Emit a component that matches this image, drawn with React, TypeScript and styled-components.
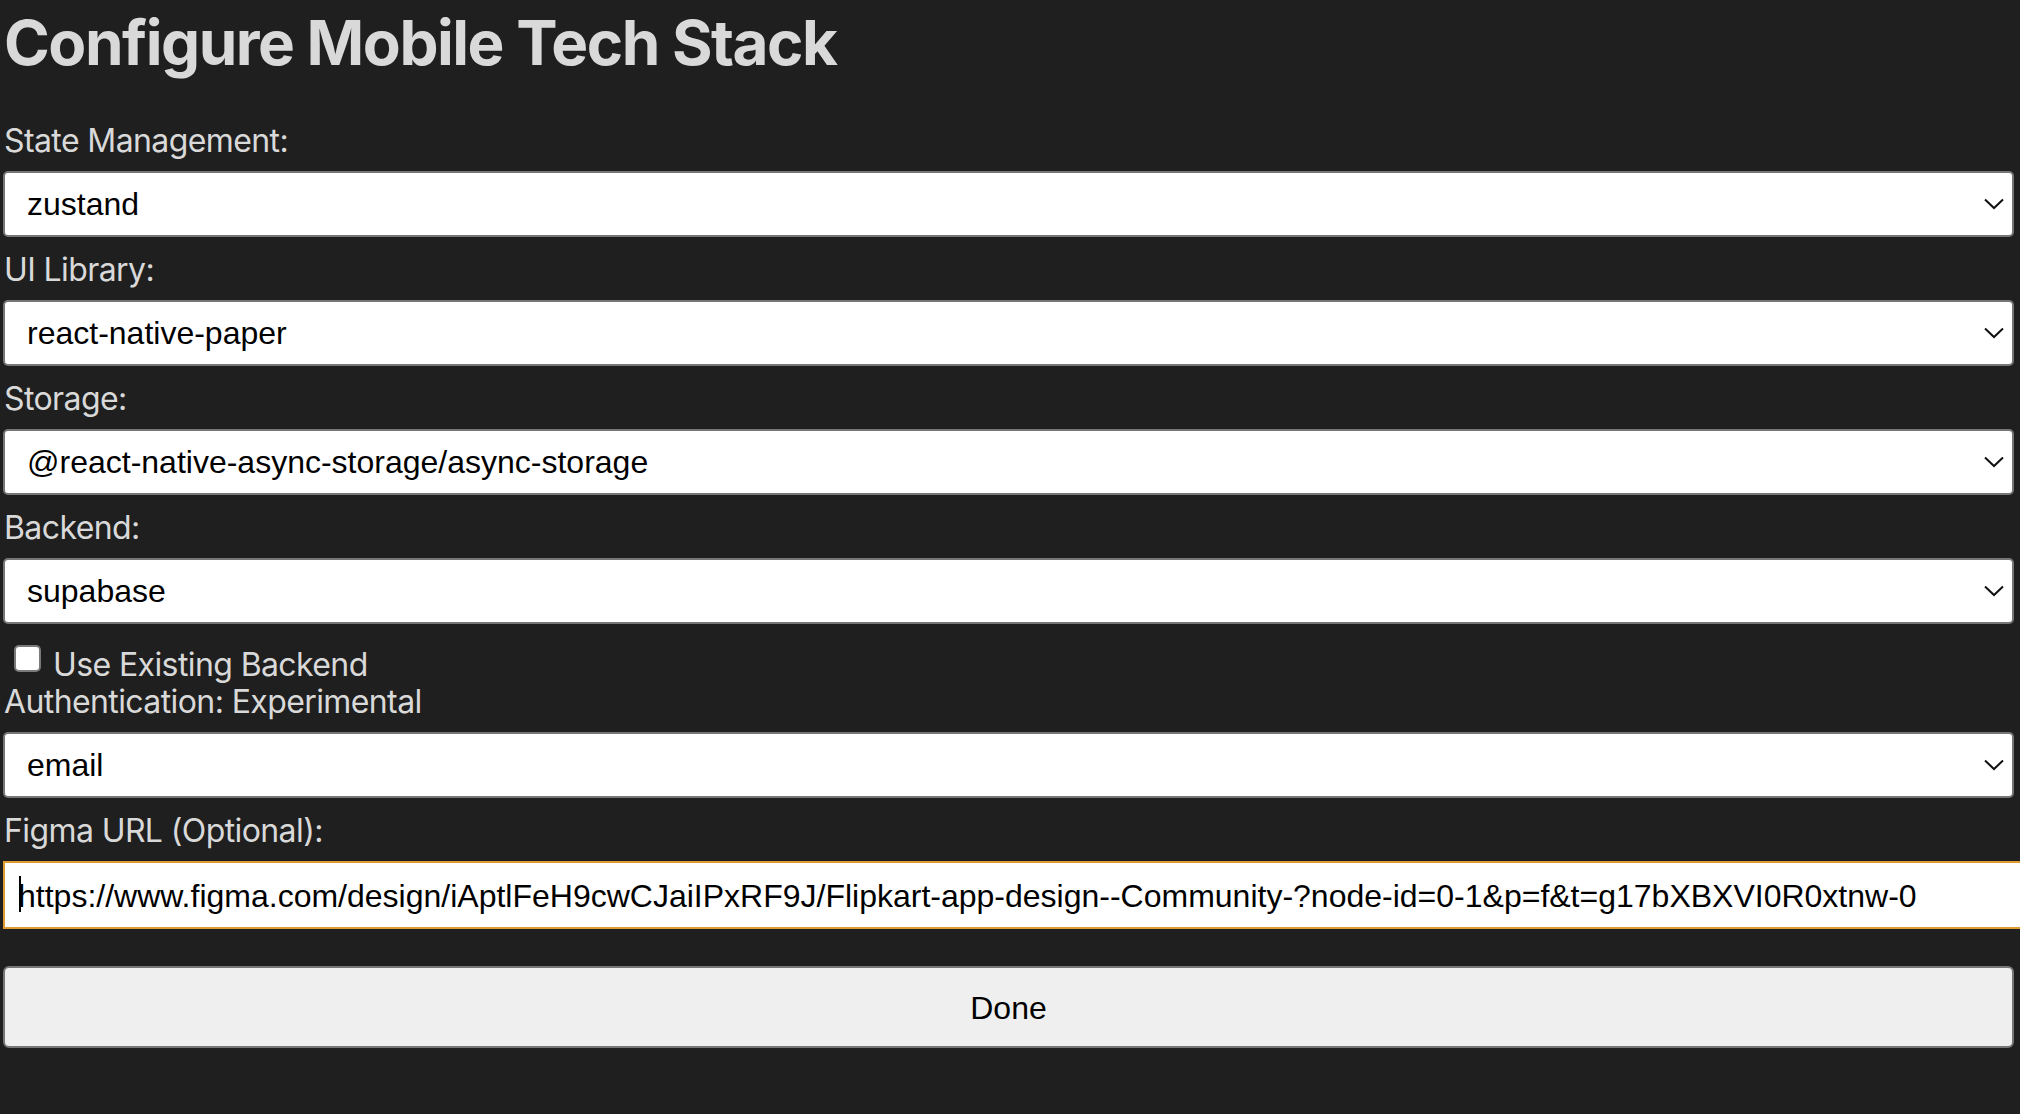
import React from "react";
import styled, { createGlobalStyle } from "styled-components";

const Global = createGlobalStyle`
  html, body {
    margin: 0;
    padding: 0;
    background: #1f1f1f;
    overflow: hidden;
  }
  * { box-sizing: border-box; }
`;

const Page = styled.div`
  min-height: 1114px;
  background: #1f1f1f;
  padding: 4px 6px 0 3px;
  font-family: Inter, "Noto Sans", sans-serif;
  color: #d9d9d9;
`;

const Title = styled.h1`
  margin: 0 0 39px 1px;
  font-size: 62px;
  line-height: 77px;
  font-weight: 700;
  letter-spacing: -1.5px;
  color: #d9d9d9;
`;

const Form = styled.form`
  display: flex;
  flex-direction: column;
`;

const Label = styled.label`
  display: block;
  height: 38px;
  line-height: 42px;
  font-size: 32px;
  margin: 0 0 13px 1px;
  letter-spacing: -0.6px;
  white-space: nowrap;
`;

const SelectWrap = styled.div`
  position: relative;
  margin-bottom: 12px;
`;

const Select = styled.select`
  appearance: none;
  -webkit-appearance: none;
  display: block;
  width: 100%;
  height: 66px;
  padding: 0 60px 0 22px;
  border: 2px solid #767676;
  border-radius: 5px;
  background: #ffffff;
  color: #000;
  font-family: "Liberation Sans", Arial, sans-serif;
  font-size: 32px;
  outline: none;
`;

const Chevron = styled.svg`
  position: absolute;
  right: 10px;
  top: 50%;
  width: 20px;
  height: 12px;
  margin-top: -6px;
  pointer-events: none;
`;

const CheckRow = styled.div`
  display: flex;
  align-items: flex-start;
  height: 45px;
`;

const CheckBox = styled.span`
  display: block;
  width: 27px;
  height: 27px;
  margin: 9px 0 0 11px;
  border: 2px solid #7a7a7a;
  border-radius: 5px;
  background: #ffffff;
`;

const CheckText = styled.span`
  display: block;
  margin: 10px 0 0 12px;
  line-height: 38px;
  font-size: 32px;
  letter-spacing: -0.6px;
  white-space: nowrap;
`;

const InputWrap = styled.div`
  position: relative;
  margin-bottom: 37px;
`;

const UrlInput = styled.input`
  display: block;
  width: calc(100% + 40px);
  height: 68px;
  padding: 2px 13px 0 13px;
  border: 2px solid #e09b32;
  border-radius: 0;
  background: #ffffff;
  color: #000;
  font-family: "Liberation Sans", Arial, sans-serif;
  font-size: 32px;
  outline: none;
`;

const Caret = styled.span`
  position: absolute;
  left: 16px;
  top: 15px;
  width: 2px;
  height: 36px;
  background: #000;
`;

const DoneButton = styled.button`
  display: block;
  width: 100%;
  height: 82px;
  border: 2px solid #767676;
  border-radius: 6px;
  background: #efefef;
  color: #000;
  font-family: "Liberation Sans", Arial, sans-serif;
  font-size: 32px;
  padding: 2px 0 0;
`;

type Field = { id: string; label: string; value: string };

const topFields: Field[] = [
  { id: "state", label: "State Management:", value: "zustand" },
  { id: "ui", label: "UI Library:", value: "react-native-paper" },
  { id: "storage", label: "Storage:", value: "@react-native-async-storage/async-storage" },
  { id: "backend", label: "Backend:", value: "supabase" },
];

const ChevronIcon = () => (
  <Chevron viewBox="0 0 20 12">
    <path d="M1 1.5 L10 10 L19 1.5" fill="none" stroke="#111" strokeWidth="2" />
  </Chevron>
);

const SelectField = ({ field }: { field: Field }) => (
  <>
    <Label htmlFor={field.id}>{field.label}</Label>
    <SelectWrap>
      <Select id={field.id} defaultValue={field.value}>
        <option value={field.value}>{field.value}</option>
      </Select>
      <ChevronIcon />
    </SelectWrap>
  </>
);

const URL =
  "https://www.figma.com/design/iAptlFeH9cwCJaiIPxRF9J/Flipkart-app-design--Community-?node-id=0-1&p=f&t=g17bXBXVI0R0xtnw-0";

export default function App() {
  return (
    <>
      <Global />
      <Page>
        <Title>Configure Mobile Tech Stack</Title>
        <Form onSubmit={(e) => e.preventDefault()}>
          {topFields.map((f) => (
            <SelectField key={f.id} field={f} />
          ))}
          <CheckRow>
            <CheckBox />
            <CheckText>Use Existing Backend</CheckText>
          </CheckRow>
          <SelectField field={{ id: "auth", label: "Authentication: Experimental", value: "email" }} />
          <Label htmlFor="figma">Figma URL (Optional):</Label>
          <InputWrap>
            <UrlInput id="figma" type="text" defaultValue={URL} />
            <Caret />
          </InputWrap>
          <DoneButton type="button">Done</DoneButton>
        </Form>
      </Page>
    </>
  );
}
